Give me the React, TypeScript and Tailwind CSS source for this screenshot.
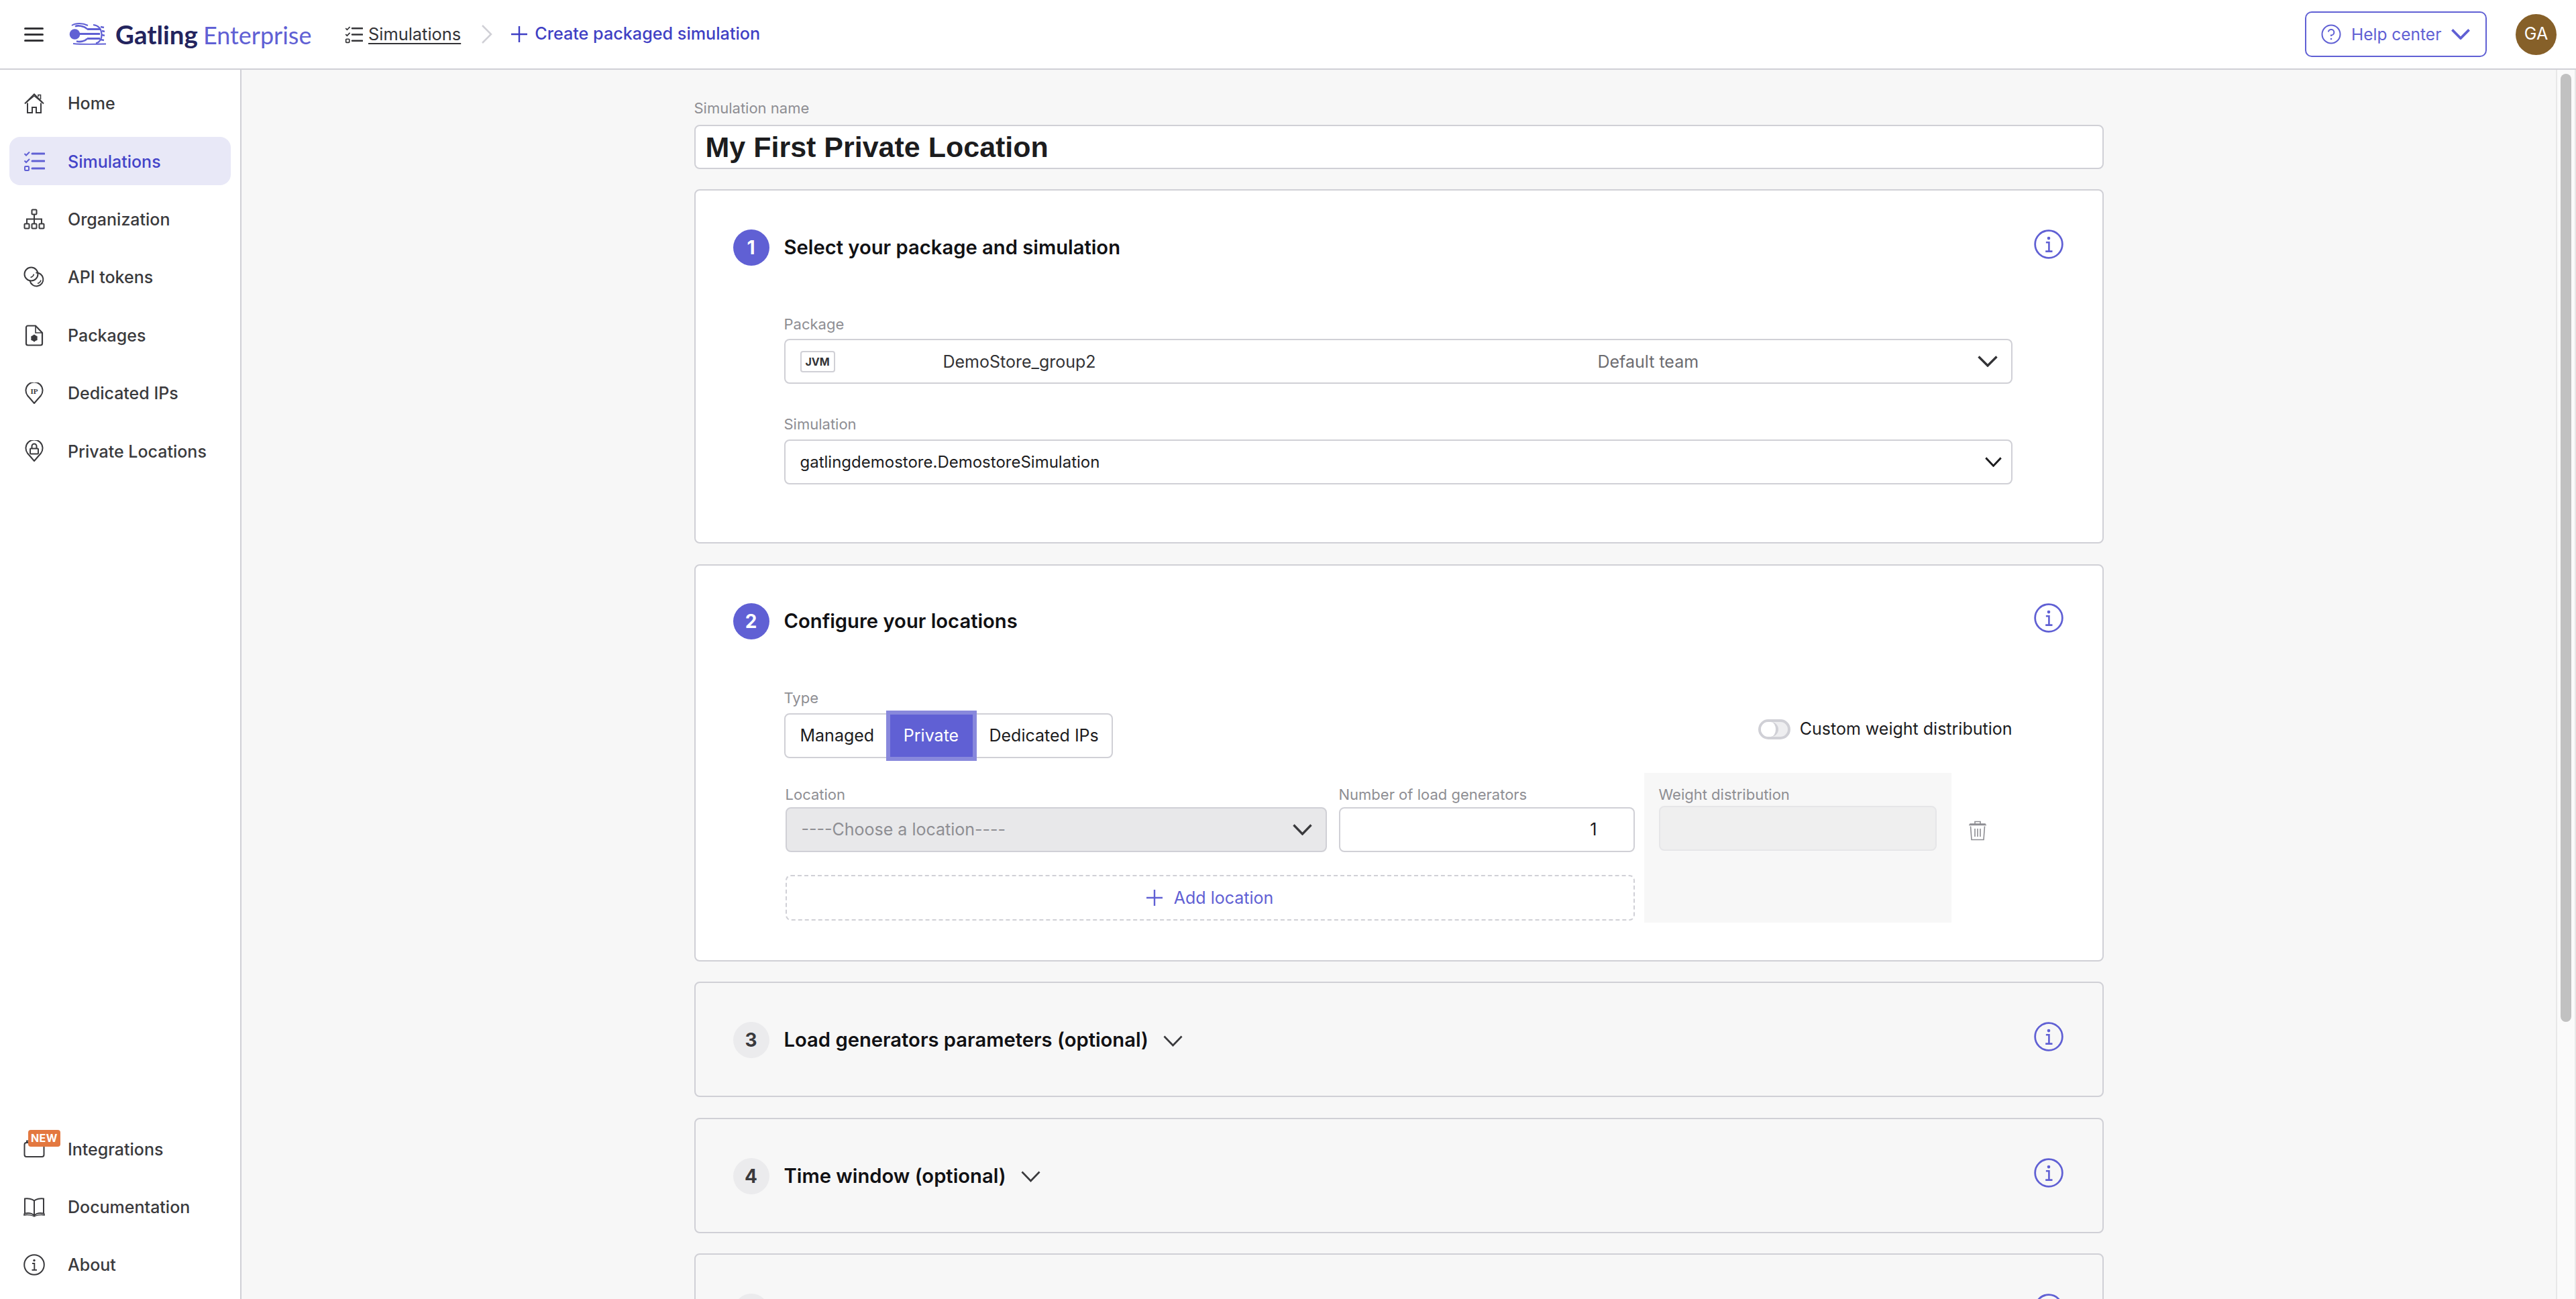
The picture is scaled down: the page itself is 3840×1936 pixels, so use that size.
import type { ReactNode } from 'react'

const inter = "font-['Inter',sans-serif]"

function HomeIcon() {
	return (
		<svg width="32" height="32" viewBox="0 0 32 32" fill="none" stroke="currentColor" strokeWidth="2">
			<path d="M2 16.5 16 2.5l14 14" />
			<path d="M5 15v-1L16 5l11 9v1" strokeWidth="1.4" />
			<path d="M6 15.5V30h7v-8h6v8h7V15.5" />
			<path d="M22 6V3.5h3.5V10" strokeWidth="1.6" />
		</svg>
	)
}

function ListIcon({ className = '', w = 32 }: { className?: string; w?: number }) {
	return (
		<svg className={className} width={w} height={w} viewBox="0 0 32 32" fill="none" stroke="currentColor" strokeWidth="3">
			<path d="M1.5 5 4 7.5 9 2.5M1.5 15.5 4 18 9 13" strokeWidth="2" />
			<rect x="2" y="24" width="6" height="6" rx="1" strokeWidth="2" />
			<path d="M13 5h18M13 16h18M13 27h18" strokeLinecap="round" />
		</svg>
	)
}

function OrgIcon() {
	return (
		<svg width="32" height="32" viewBox="0 0 32 32" fill="none" stroke="currentColor" strokeWidth="2">
			<rect x="12.5" y="1.5" width="7" height="7" rx="1" />
			<rect x="1.5" y="22.5" width="7" height="7" rx="1" />
			<rect x="12.5" y="22.5" width="7" height="7" rx="1" />
			<rect x="23.5" y="22.5" width="7" height="7" rx="1" />
			<path d="M16 8.5v14M5 22.5V15.5h22v7" />
		</svg>
	)
}

function TokenIcon() {
	return (
		<svg width="32" height="32" viewBox="0 0 32 32" fill="none" stroke="currentColor" strokeWidth="2">
			<circle cx="11.5" cy="11.5" r="10" fill="#fff" />
			<path d="M10.5 16.5q4-1 5-5" strokeWidth="1.5" />
			<path d="M18.4 9.5a10 10 0 1 1-8.8 12" />
			<path d="M21 25.5q4-1 5-5" strokeWidth="1.5" />
		</svg>
	)
}

function PackageIcon() {
	return (
		<svg width="32" height="32" viewBox="0 0 32 32" fill="none" stroke="currentColor" strokeWidth="2.2">
			<path d="M6.5 1.5H18L28 12v16a2.500 2.500 0 0 1-2.500 2.500h-19A2.500 2.500 0 0 1 4 28V4a2.500 2.500 0 0 1 2.500-2.500Z" />
			<path d="M18 1.500V12h10" strokeWidth="1.600" />
			<circle cx="16" cy="20" r="3.200" strokeWidth="3" />
			<path d="M16 14.800v10.400M11.500 17.400l9 5.200M20.500 17.400l-9 5.200" strokeWidth="2" />
		</svg>
	)
}

function IpPinIcon() {
	return (
		<svg width="32" height="32" viewBox="0 0 32 32" fill="none" stroke="currentColor" strokeWidth="2">
			<path d="M16 31 6 19.500A12.500 12.500 0 1 1 26 19.500Z" strokeLinejoin="round" />
			<text x="16" y="16.500" textAnchor="middle" fontSize="11" fontWeight="700" fontFamily="'Liberation Serif',serif" fill="currentColor" stroke="none">
				IP
			</text>
		</svg>
	)
}

function LockPinIcon() {
	return (
		<svg width="32" height="32" viewBox="0 0 32 32" fill="none" stroke="currentColor" strokeWidth="2">
			<path d="M16 31 6 19.500A12.500 12.500 0 1 1 26 19.500Z" strokeLinejoin="round" />
			<rect x="10" y="12.500" width="12" height="8" rx="1" />
			<path d="M12.500 12.500V9a3.500 3.500 0 0 1 7 0v3.500" />
		</svg>
	)
}

function BoxIcon() {
	return (
		<svg width="32" height="30" viewBox="0 0 32 30" fill="none" stroke="currentColor" strokeWidth="2">
			<rect x="1.500" y="5" width="29" height="21" rx="3" />
			<path d="M5 5V2.500h6" />
		</svg>
	)
}

function BookIcon() {
	return (
		<svg width="32" height="30" viewBox="0 0 32 30" fill="none" stroke="currentColor" strokeWidth="2">
			<path d="M16 5.500C13 3 7 1.500 2 2.500v22c5-1 11 0 14 3 3-3 9-4 14-3v-22C25 1.500 19 3 16 5.500Z" />
			<path d="M16 5.500v22" />
			<path d="M1 24.500v2.500c5-1 12 0 15 2 3-2 10-3 15-2v-2.500" strokeWidth="1.500" />
		</svg>
	)
}

function InfoIcon({ size = 32, className = '', sw = 2 }: { size?: number; className?: string; sw?: number }) {
	return (
		<svg className={className} width={size} height={size} viewBox="0 0 32 32" fill="none" stroke="currentColor" strokeWidth={sw}>
			<circle cx="16" cy="16" r="14.800" />
			<circle cx="16" cy="9.500" r="1.700" fill="currentColor" stroke="none" />
			<path d="M13 14h3.300v9.500M12.500 23.700h7.500" strokeWidth={sw * 0.95} />
		</svg>
	)
}

function Chevron({ className = '', sw = 2.200, w = 30, h = 17 }: { className?: string; sw?: number; w?: number; h?: number }) {
	return (
		<svg className={className} width={w} height={h} viewBox="0 0 30 17" fill="none" stroke="currentColor" strokeWidth={sw} preserveAspectRatio="none">
			<path d="M1.500 1.500 15 15 28.500 1.500" />
		</svg>
	)
}

function Plus({ size = 24 }: { size?: number }) {
	return (
		<svg width={size} height={size} viewBox="0 0 24 24" fill="none" stroke="currentColor" strokeWidth="2.400">
			<path d="M12 0v24M0 12h24" />
		</svg>
	)
}

function TrashIcon() {
	return (
		<svg width="28" height="30" viewBox="0 0 28 30" fill="none" stroke="currentColor" strokeWidth="1.600">
			<path d="M1 6.500h26M3 6.500V5h22v1.500M10 4.500V1.500h8v3" />
			<path d="M3.500 8.500 5 28.500h18l1.500-20M10 12v12M14 12v12M18 12v12" />
		</svg>
	)
}

function GatlingMark() {
	return (
		<svg width="56" height="34" viewBox="0 0 56 34" fill="none" stroke="currentColor" className="text-[#6060d4]">
			<circle cx="8.500" cy="17" r="7.800" fill="currentColor" stroke="none" />
			<path d="M10 16.500h17" strokeWidth="3" />
			<path d="M4 4C10 0 20 0 28 4" strokeWidth="2" />
			<path d="M27 9.500C22 4 12 3.500 9 5.500M27 23.500c-3 4-10 5.500-16 4" strokeWidth="2.600" />
			<path d="M27 9.500h19M27 16.500h19M27 23.500h19" strokeWidth="2.800" />
			<path d="M36 3c8 1 12 6 12.500 14S45 29 40 30.500" strokeWidth="2.200" />
			<path d="M47 6l5 1M49 12l4 1M49 18l4 1M47 25l5 1" strokeWidth="2.400" />
			<path d="M6 31c14 1.500 32 1 49 .500" strokeWidth="1.800" />
		</svg>
	)
}

function NavItem({ icon, label, active, badge }: { icon: ReactNode; label: string; active?: boolean; badge?: boolean }) {
	return (
		<div
			className={`relative mx-[14px] flex h-[72px] items-center gap-[34px] rounded-[16px] pl-[20px] text-[25px] font-[450] ${
				active ? 'bg-[#e8e8f7] text-[#4343c8]' : 'text-[#3a3a3d]'
			}`}
		>
			<span className={`flex h-[32px] w-[33px] items-center justify-center ${active ? 'text-[#6060d4]' : ''}`}>{icon}</span>
			<span className="pt-[2px]">{label}</span>
			{badge && (
				<span className="absolute top-[7px] left-[28px] rounded-[4px] bg-[#e37840] px-[4px] text-[16px] leading-[25px] font-bold tracking-[0.4px] text-white">
					NEW
				</span>
			)}
		</div>
	)
}

function Label({ children, className = '' }: { children: ReactNode; className?: string }) {
	return <div className={`text-[22px] leading-[28px] text-[#8e8e93] ${className}`}>{children}</div>
}

function StepHeader({ n, title, active, chevron }: { n?: number; title?: string; active?: boolean; chevron?: boolean }) {
	return (
		<div className="flex items-start justify-between">
			<div className="flex h-[54px] items-center">
				<div
					className={`flex h-[54px] w-[54px] items-center justify-center rounded-full text-[28px] font-bold ${
						active ? 'bg-[#6060d4] text-white' : 'bg-[#ebebed] text-[#3a3a3d]'
					}`}
				>
					{n}
				</div>
				{title && <div className="ml-[22px] text-[29.200px] font-semibold text-[#111114]">{title}</div>}
				{chevron && <Chevron className="mt-[2px] ml-[22px] text-[#3a3a3d]" w={29} h={17} sw={2.800} />}
			</div>
			<InfoIcon size={44} sw={2} className="mr-[58px] text-[#6060d4]" />
		</div>
	)
}

function CollapsedCard({ n, title }: { n?: number; title?: string }) {
	return (
		<section className="mb-[30.500px] h-[172px] shrink-0 rounded-[8px] border-2 border-[#d0d0d6] pt-[58px] pl-[56px]">
			<StepHeader n={n} title={title} chevron={!!title} />
		</section>
	)
}

export default function App() {
	return (
		<div className={`flex h-screen flex-col overflow-hidden bg-white ${inter}`}>
			<header className="flex h-[104px] shrink-0 items-center border-b-2 border-[#d0d0d6] pr-[29px]">
				<div className="ml-[36px] flex w-[29px] flex-col gap-[6px]">
					<span className="h-[3px] rounded bg-[#333336]" />
					<span className="h-[3px] rounded bg-[#333336]" />
					<span className="h-[3px] rounded bg-[#333336]" />
				</div>
				<div className="ml-[38px]">
					<GatlingMark />
				</div>
				<div className="ml-[13px] flex w-[292px] items-baseline font-['Lato',sans-serif] leading-none">
					<span className="text-[38.500px] font-bold text-[#23245e]">Gatling</span>
					<span className="ml-[8px] text-[36px] font-normal text-[#6060d4]">Enterprise</span>
				</div>
				<ListIcon w={27} className="ml-[50px] text-[#333336]" />
				<span className="ml-[8px] text-[25.400px] text-[#333336] underline underline-offset-[4px]">Simulations</span>
				<svg className="ml-[30px] text-[#d0d0d6]" width="18" height="28" viewBox="0 0 18 28" fill="none" stroke="currentColor" strokeWidth="2.500">
					<path d="M2 1l13 13L2 27" />
				</svg>
				<span className="ml-[27px] text-[#3f3fc4]">
					<Plus />
				</span>
				<span className="ml-[11px] text-[25.200px] font-medium text-[#3f3fc4]">Create packaged simulation</span>
				<button className="ml-auto flex h-[68px] w-[271px] items-center rounded-[10px] border-2 border-[#6060d4] pl-[22px] text-[24.500px] text-[#6060d4]">
					<svg width="30" height="30" viewBox="0 0 30 30" fill="none" stroke="currentColor" strokeWidth="2">
						<circle cx="15" cy="15" r="13.500" />
						<path d="M10.800 11.500A4.300 4.300 0 1 1 15 16.500V18" />
						<circle cx="15" cy="22" r="1.300" fill="currentColor" stroke="none" />
					</svg>
					<span className="ml-[15px]">Help center</span>
					<Chevron className="ml-[15px]" w={28} h={16} sw={4} />
				</button>
				<div className="ml-[43px] flex h-[61px] w-[61px] items-center justify-center rounded-full bg-[#866029] text-[25px] text-white">GA</div>
			</header>

			<div className="flex min-h-0 flex-1">
				<aside className="flex w-[360px] shrink-0 flex-col border-r-2 border-[#d0d0d6] bg-white pt-[14px] pb-[15px]">
					<div className="flex flex-col gap-[14.400px]">
						<NavItem icon={<HomeIcon />} label="Home" />
						<NavItem icon={<ListIcon />} label="Simulations" active />
						<NavItem icon={<OrgIcon />} label="Organization" />
						<NavItem icon={<TokenIcon />} label="API tokens" />
						<NavItem icon={<PackageIcon />} label="Packages" />
						<NavItem icon={<IpPinIcon />} label="Dedicated IPs" />
						<NavItem icon={<LockPinIcon />} label="Private Locations" />
					</div>
					<div className="mt-auto flex flex-col gap-[14px]">
						<NavItem icon={<BoxIcon />} label="Integrations" badge />
						<NavItem icon={<BookIcon />} label="Documentation" />
						<NavItem icon={<InfoIcon />} label="About" />
					</div>
				</aside>

				<main className="min-w-0 flex-1 overflow-hidden bg-[#f7f7f7]">
					<div className="mx-auto flex h-full w-[2101px] flex-col">
						<Label className="mt-[43px]">Simulation name</Label>
						<div className="mt-[11px] flex h-[66px] shrink-0 items-center rounded-[8px] border-2 border-[#d0d0d6] bg-white pl-[15px] font-['Liberation_Sans',sans-serif] text-[43px] font-bold text-[#1c1c1e]">
							My First Private Location
						</div>

						<section className="mt-[30px] h-[528px] shrink-0 rounded-[8px] border-2 border-[#d0d0d6] bg-white pt-[58px] pl-[56px]">
							<StepHeader n={1} title="Select your package and simulation" active />
							<div className="mt-[73px] ml-[76px] w-[1831px]">
								<Label>Package</Label>
								<div className="mt-[8px] flex h-[67px] items-center rounded-[8px] border-2 border-[#d0d0d6] pr-[20px] pl-[22px] text-[25px] text-[#333336]">
									<span className="flex h-[32px] w-[52px] items-center justify-center rounded-[4px] border-2 border-[#d0d0d6] text-[16px] font-bold">JVM</span>
									<span className="ml-[161px] w-[976px] pt-[2px]">DemoStore_group2</span>
									<span className="pt-[2px] text-[#6c6c70]">Default team</span>
									<Chevron className="ml-auto" sw={3.400} />
								</div>
								<Label className="mt-[46px]">Simulation</Label>
								<div className="mt-[9px] flex h-[67px] items-center justify-between rounded-[8px] border-2 border-[#d0d0d6] pr-[14px] pl-[22px] text-[24px] text-[#1c1c1e]">
									<span>gatlingdemostore.DemostoreSimulation</span>
									<Chevron w={25} h={15} sw={3.400} />
								</div>
							</div>
						</section>

						<section className="mt-[31px] h-[592px] shrink-0 rounded-[8px] border-2 border-[#d0d0d6] bg-white pt-[56px] pl-[56px]">
							<StepHeader n={2} title="Configure your locations" active />
							<div className="mt-[73px] ml-[76px] w-[1831px]">
								<Label>Type</Label>
								<div className="flex items-start justify-between">
									<div className="mt-[9px] flex h-[67px] rounded-[8px] border-2 border-[#d0d0d6] text-[25px] text-[#1c1c1e]">
										<span className="flex w-[150px] items-center pl-[22px]">Managed</span>
										<span className="z-10 -my-[6px] flex w-[135px] items-center justify-center border-[6px] border-[#8888dc] bg-[#6060d4] text-white">Private</span>
										<span className="flex w-[201px] items-center pl-[19px]">Dedicated IPs</span>
									</div>
									<div className="mt-[14px] flex items-center gap-[14px] text-[25px] text-[#1c1c1e]">
										<span className="flex h-[30px] w-[48px] rounded-full border-[4px] border-[#d0d0d6] bg-[#eeeef0]">
											<span className="h-[22px] w-[26px] rounded-full border-r-[4px] border-[#d0d0d6] bg-white" />
										</span>
										Custom weight distribution
									</div>
								</div>

								<div className="mt-[22px] flex">
									<div className="ml-[2px] w-[1266px] pt-[18px]">
										<div className="flex gap-[18px]">
											<div className="w-[807px]">
												<Label>Location</Label>
												<div className="mt-[5px] flex h-[67px] items-center justify-between rounded-[8px] border-2 border-[#d0d0d6] bg-[#e8e8ea] pr-[20px] pl-[22px] text-[25px] text-[#8e8e93]">
													<span className="pt-[1px]">----Choose a location----</span>
													<Chevron className="text-[#3a3a3d]" w={29} sw={3.400} />
												</div>
											</div>
											<div className="flex-1">
												<Label>Number of load generators</Label>
												<div className="mt-[5px] flex h-[67px] items-center justify-end rounded-[8px] border-2 border-[#d0d0d6] bg-white pr-[54px] text-[25px] text-[#1c1c1e]">1</div>
											</div>
										</div>
										<div className="mt-[34px] flex h-[68px] items-center justify-center gap-[17px] rounded-[8px] border-2 border-dashed border-[#d0d0d6] text-[25px] text-[#6060d4]">
											<Plus />
											<span className="pt-[1px]">Add location</span>
										</div>
									</div>
									<div className="ml-[14px] h-[223px] w-[458px] bg-[#f7f7f7] px-[22px] pt-[18px]">
										<Label>Weight distribution</Label>
										<div className="mt-[3px] h-[67px] rounded-[8px] border-2 border-[#e6e6e8] bg-[#efefef]" />
									</div>
									<div className="mt-[71px] ml-[25px] text-[#8e8e93]">
										<TrashIcon />
									</div>
								</div>
							</div>
						</section>

						<div className="mt-[30px] flex flex-col">
							<CollapsedCard n={3} title="Load generators parameters (optional)" />
							<CollapsedCard n={4} title="Time window (optional)" />
							<CollapsedCard />
						</div>
					</div>
				</main>

				<div className="flex w-[30px] shrink-0 justify-center border-x-2 border-[#e8e8e8] bg-[#fafafa] pt-[6px]">
					<div className="h-[1413px] w-[16px] rounded-full bg-[#c1c1c1]" />
				</div>
			</div>
		</div>
	)
}
